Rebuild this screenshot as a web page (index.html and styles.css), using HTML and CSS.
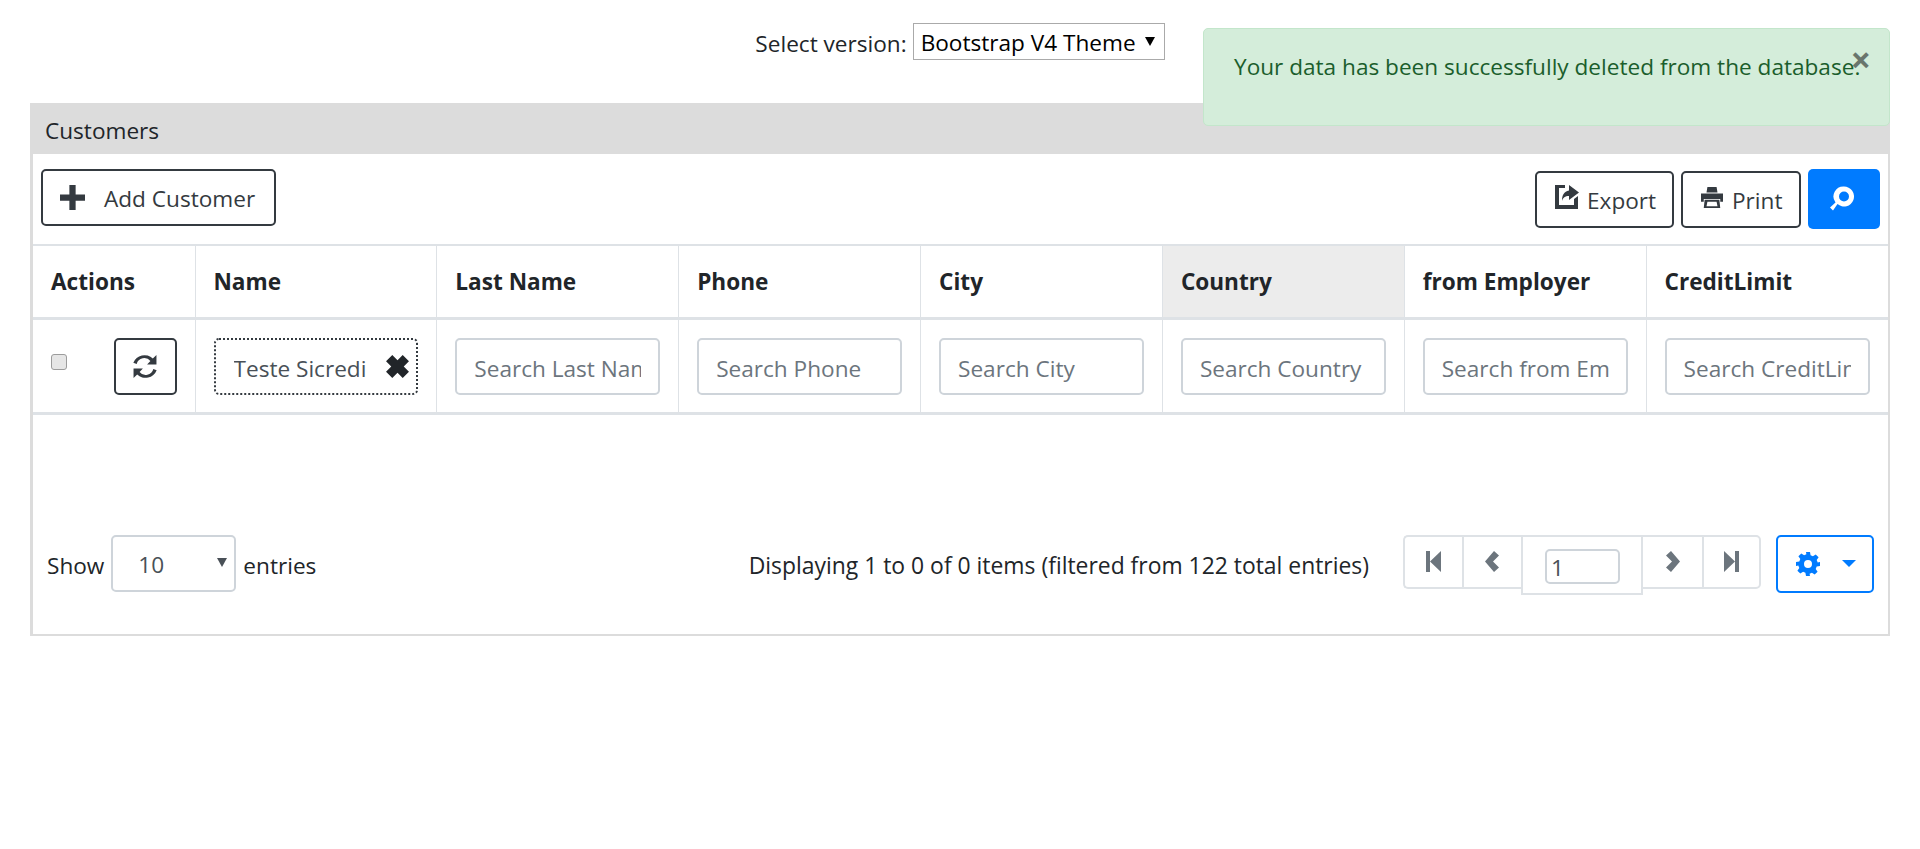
FILE: index.html
```html
<!doctype html>
<html>
<head>
<meta charset="utf-8">
<title>Customers</title>
<link rel="stylesheet" href="styles.css">
</head>

<body>
<div class="version">
	<label class="version-label">Select version:</label>
	<div class="version-select">Bootstrap V4 Theme <span class="version-arrow"></span></div>
</div>

<div class="alert">
	<span>Your data has been successfully deleted from the database.</span>
	<span class="alert-close">×</span>
</div>

<div class="card">
	<div class="card-title">Customers</div>
	<div class="toolbar">
		<button class="btn btn-add">
			<svg class="ico-plus" viewBox="0 0 24 24"><path d="M9 0h6v9h9v6h-9v9H9v-9H0V9h9z"/></svg>
			Add Customer
		</button>
		<div class="toolbar-right">
			<button class="btn btn-export">
				<svg class="ico-export" viewBox="0 0 24 24"><path d="M0 0h10v3H4v17h15v-6l4-3v13H0zM14 0l10 7.500-10 7.500v-4c-4 0-6 1.500-7 5 0-6 2-9.500 7-10.500z"/></svg>
				Export
			</button>
			<button class="btn btn-print">
				<svg class="ico-print" viewBox="0 0 24 24"><path d="M7 0h10l1 6H6zM0 7h24v9h-3v-3H3v3H0zM4 14h16l1 9H3zm3 2l-1 5h12l-1-5z" fill-rule="evenodd"/></svg>
				Print
			</button>
			<button class="btn-search">
				<svg class="ico-search" viewBox="0 0 24 24"><path d="M14 0a10 10 0 1 1-6.500 17.600L3 24 0 21l5.500-5A10 10 0 0 1 14 0zm0 5a5 5 0 1 0 0 10 5 5 0 0 0 0-10z" fill-rule="evenodd"/></svg>
			</button>
		</div>
	</div>

	<table class="grid">
		<colgroup><col class="col-actions"><col><col><col><col><col><col><col></colgroup>
		<thead>
			<tr>
				<th>Actions</th>
				<th>Name</th>
				<th>Last Name</th>
				<th>Phone</th>
				<th>City</th>
				<th class="sorted">Country</th>
				<th>from Employer</th>
				<th>CreditLimit</th>
			</tr>
		</thead>
		<tbody>
			<tr>
				<td>
					<div class="actions">
						<span class="check"></span>
						<button class="btn btn-refresh">
							<svg class="ico-refresh" viewBox="0 0 24 24"><path d="M23 1v9h-9l3.200-3.200A7.500 7.500 0 0 0 4 9.500L.8 8.500A11.500 11.500 0 0 1 19.500 4.300zM1 23v-9h9l-3.200 3.200A7.500 7.500 0 0 0 20 14.500l3.200 1A11.500 11.500 0 0 1 4.500 19.700z"/></svg>
						</button>
					</div>
				</td>
				<td>
					<div class="search search-active">
						<span class="search-value">Teste Sicredi</span>
						<svg class="ico-clear" viewBox="0 0 24 24"><path d="M7 1l5 5 5-5 6 6-5 5 5 5-6 6-5-5-5 5-6-6 5-5-5-5z"/></svg>
					</div>
				</td>
				<td><input class="search" placeholder="Search Last Name"></td>
				<td><input class="search" placeholder="Search Phone"></td>
				<td><input class="search" placeholder="Search City"></td>
				<td><input class="search" placeholder="Search Country"></td>
				<td><input class="search" placeholder="Search from Employer"></td>
				<td><input class="search" placeholder="Search CreditLimit"></td>
			</tr>
		</tbody>
	</table>

	<div class="footer">
		<div class="show">
			Show
			<div class="show-select">10<span class="show-arrow"></span></div>
			entries
		</div>
		<div class="footer-right">
			<span class="info">Displaying 1 to 0 of 0 items (filtered from 122 total entries)</span>
			<div class="pager">
				<a class="page">
					<svg class="ico-page" viewBox="0 0 15 21"><path d="M0 0h4v21H0zM15 0v21L4 10.500z"/></svg>
				</a>
				<a class="page">
					<svg class="ico-page" viewBox="0 0 15 21"><path d="M9 0l5 4.500-6 6 6 6-5 4.500L0 10.500z"/></svg>
				</a>
				<div class="page-current"><input class="page-input" value="1"></div>
				<a class="page">
					<svg class="ico-page" viewBox="0 0 15 21"><path d="M6 0l-5 4.500 6 6-6 6 5 4.500 9-10.500z"/></svg>
				</a>
				<a class="page page-last">
					<svg class="ico-page" viewBox="0 0 15 21"><path d="M15 0h-4v21h4zM0 0v21l11-10.500z"/></svg>
				</a>
			</div>
			<button class="btn-settings">
				<svg class="ico-cog" viewBox="0 0 24 24"><path fill-rule="evenodd" d="M10 0h4l.6 3.300 2.300 1 2.800-1.900 2.900 2.900-1.900 2.800 1 2.300L24 10v4l-3.300.6-1 2.300 1.900 2.800-2.900 2.900-2.800-1.900-2.300 1L14 24h-4l-.6-3.300-2.300-1-2.800 1.900-2.900-2.900 1.900-2.800-1-2.300L0 14v-4l3.300-.6 1-2.300-1.900-2.800 2.900-2.900 2.800 1.900 2.300-1zM12 8a4 4 0 1 0 0 8 4 4 0 0 0 0-8z"/></svg>
				<span class="caret"></span>
			</button>
		</div>
	</div>
</div>
</body>
</html>
```

FILE: styles.css
```css
* {box-sizing:border-box;}

body {margin:0; background:#fff; color:#212529; font-family:"Open Sans","Liberation Sans",sans-serif; font-size:22.6px;}

button {font-family:inherit; font-size:inherit; color:inherit; background:none; padding:0; display:flex; align-items:center;}
input {font-family:inherit; font-size:inherit;}
svg {fill:currentColor; display:block; flex:none;}

/* version */
.version {height:103px; padding-top:23px; display:flex; justify-content:center; align-items:flex-start;}
.version-label {line-height:41px; margin-right:6px;}
.version-select {width:252px; height:37px; border:1px solid #aaa; color:#000; line-height:37px; padding-left:7px; position:relative; white-space:nowrap;}
.version-arrow {position:absolute; right:9px; top:13px; border:5px solid transparent; border-top:9px solid #000; border-bottom:0;}

/* alert */
.alert {position:absolute; left:1203px; top:28px; width:687px; height:98px; padding:22px 30px; background:#d4edda; border:1px solid #c3e6cb; border-radius:5px; color:#1b5e2c; white-space:nowrap;}
.alert-close {position:absolute; right:18px; top:11px; font-size:36px; font-weight:bold; line-height:40px; color:#000; opacity:.5;}

/* card */
.card {margin:0 30px; height:533px; border:solid #dcdcdc; border-width:0 2px 2px 3px;}
.card-title {height:51px; margin-left:-3px; margin-right:-2px; padding-left:15px; background:#dcdcdc; line-height:56px;}

.toolbar {height:90px; padding:15px 8px 0 8px; display:flex; justify-content:space-between; align-items:flex-start;}
.toolbar-right {display:flex; gap:7px;}

.btn {border:2px solid #343a40; border-radius:5px; color:#343a40; white-space:nowrap; padding-top:2px;}
.btn-add {width:235px; height:57px; padding-left:17px; gap:19px;}
.btn-export {width:139px; height:57px; margin-top:2px; padding-left:18px; gap:8px;}
.btn-print {width:120px; height:57px; margin-top:2px; padding-left:17px; gap:8px;}
.btn-search {width:72px; height:60px; border:0; border-radius:5px; background:#007bff; color:#fff; justify-content:center;}
.btn-refresh {width:63px; height:57px; padding-top:0; justify-content:center;}

.ico-plus {width:25px; height:25px; margin-top:-2px;}
.ico-export {width:24px; height:24px; margin-top:-7px;}
.ico-print {width:24px; height:22px; margin-top:-6px;}
.ico-search {width:24px; height:25px; margin:-2px 5px 0 0;}
.ico-refresh {width:26px; height:25px;}
.ico-clear {width:25px; height:25px;}
.ico-page {width:15px; height:21px;}
.ico-cog {width:24px; height:24px;}

/* table */
.grid {width:100%; table-layout:fixed; border-collapse:collapse;}
.col-actions {width:162px;}
.grid th, .grid td {border:1px solid #dee2e6; padding:0 18px;}
.grid tr > :first-child {border-left:0;}
.grid tr > :last-child {border-right:0;}
.grid th {height:73px; font-weight:bold; text-align:left; white-space:nowrap; border-top:2px solid #dee2e6; border-bottom:3px solid #dee2e6;}
.grid td {height:95px; padding-top:2px; border-bottom:3px solid #dee2e6;}
.grid .sorted {background:#ececec;}

.actions {display:flex; align-items:center; justify-content:space-between;}
.check {width:16px; height:16px; margin-top:-10px; border:1px solid #9c9c9c; border-radius:3px; background:#e6e6e6;}

.search {display:block; width:100%; height:57px; padding:3px 17px 0; border:2px solid #ced4da; border-radius:5px; color:#495057; background:#fff; outline:0;}
.search::placeholder {color:#6c757d; opacity:1;}
.search-active {display:flex; align-items:center; justify-content:space-between; padding:0 6px 0 18px; border:2px dotted #343a40; white-space:nowrap;}
.search-value {overflow:hidden; padding-top:3px;}
.ico-clear {color:#212529;}

/* footer */
.footer {padding:120px 14px 0 14px; display:flex; justify-content:space-between; align-items:flex-start;}
.show {display:flex; align-items:flex-start; gap:7px; line-height:61px;}
.show-select {width:125px; height:57px; padding-left:25px; border:2px solid #ced4da; border-radius:5px; line-height:55px; color:#495057; position:relative;}
.show-arrow {position:absolute; right:7px; top:21px; border:5px solid transparent; border-top:9px solid #495057; border-bottom:0;}

.footer-right {display:flex; align-items:flex-start;}
.info {line-height:61px; margin-right:34px; font-size:22.9px;}

.pager {display:flex; align-items:flex-start; height:60px;}
.page {width:59px; height:54px; border:2px solid #dee2e6; border-right:0; display:flex; align-items:center; justify-content:center; color:#6c757d;}
.pager > :first-child {border-radius:5px 0 0 5px;}
.page-last {border-right:2px solid #dee2e6; border-radius:0 5px 5px 0;}
.page-current {width:122px; height:60px; padding:12px 0 0 22px; border:2px solid #dee2e6;}
.page-current + .page {border-left:0;}
.page-input {display:block; width:75px; height:35px; padding:2px 4px 0; border:2px solid #ced4da; border-radius:5px; color:#495057; outline:0;}

.btn-settings {width:98px; height:58px; margin-left:15px; padding-left:18px; border:2px solid #007bff; border-radius:5px; color:#007bff; gap:22px;}
.caret {border:7px solid transparent; border-top:7px solid #007bff; border-bottom:0;}
```
